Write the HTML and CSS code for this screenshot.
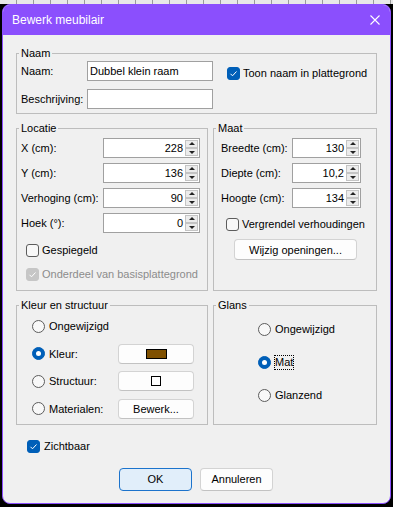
FILE: index.html
```html
<!DOCTYPE html>
<html lang="nl">
<head>
<meta charset="utf-8">
<title>Bewerk meubilair</title>
<link rel="stylesheet" href="styles.css">
</head>
<body>
<div class="ruler"></div>
<div class="dialog">
  <div class="titlebar">
    <span class="title">Bewerk meubilair</span>
    <svg class="close" width="10" height="10" viewBox="0 0 10 10"><path d="M0.5 0.5L9.5 9.5M9.5 0.5L0.5 9.5" stroke="#fff" stroke-width="1.1" fill="none"/></svg>
  </div>
  <div class="content">
    <fieldset class="grp naam">
      <legend>Naam</legend>
      <div class="naam-grid">
        <span>Naam:</span>
        <span class="edit">Dubbel klein raam</span>
        <label class="chk toon"><span class="box on"><svg width="11" height="11" viewBox="0 0 11 11"><path d="M2.5 5.8L4.5 7.8L8.5 3.5" stroke="#fff" stroke-width="1" fill="none"/></svg></span>Toon naam in plattegrond</label>
        <span>Beschrijving:</span>
        <span class="edit"></span>
      </div>
    </fieldset>

    <div class="pair">
      <fieldset class="grp locatie">
        <legend>Locatie</legend>
        <div class="form loc-form">
          <span>X (cm):</span>
          <div class="spin"><span class="val">228</span><span class="arrows"><span class="up"></span><span class="down"></span></span></div>
          <span>Y (cm):</span>
          <div class="spin"><span class="val">136</span><span class="arrows"><span class="up"></span><span class="down"></span></span></div>
          <span>Verhoging (cm):</span>
          <div class="spin"><span class="val">90</span><span class="arrows"><span class="up"></span><span class="down"></span></span></div>
          <span>Hoek (°):</span>
          <div class="spin"><span class="val">0</span><span class="arrows"><span class="up"></span><span class="down"></span></span></div>
        </div>
        <div class="checks">
          <label class="chk"><span class="box"></span>Gespiegeld</label>
          <label class="chk dis"><span class="box on dis"><svg width="11" height="11" viewBox="0 0 11 11"><path d="M2.5 5.8L4.5 7.8L8.5 3.5" stroke="#fff" stroke-width="1" fill="none"/></svg></span>Onderdeel van basisplattegrond</label>
        </div>
      </fieldset>

      <fieldset class="grp maat">
        <legend>Maat</legend>
        <div class="form maat-form">
          <span>Breedte (cm):</span>
          <div class="spin"><span class="val">130</span><span class="arrows"><span class="up"></span><span class="down"></span></span></div>
          <span>Diepte (cm):</span>
          <div class="spin"><span class="val">10,2</span><span class="arrows"><span class="up"></span><span class="down"></span></span></div>
          <span>Hoogte (cm):</span>
          <div class="spin"><span class="val">134</span><span class="arrows"><span class="up"></span><span class="down"></span></span></div>
        </div>
        <label class="chk vergrendel"><span class="box"></span>Vergrendel verhoudingen</label>
        <button class="btn wijzig">Wijzig openingen...</button>
      </fieldset>
    </div>

    <div class="pair second">
      <fieldset class="grp kleur">
        <legend>Kleur en structuur</legend>
        <div class="radio-grid">
          <label class="rad-row"><span class="rad"></span>Ongewijzigd</label>
          <span></span>
          <label class="rad-row"><span class="rad on"></span>Kleur:</label>
          <button class="btn small"><span class="swatch"></span></button>
          <label class="rad-row"><span class="rad"></span>Structuur:</label>
          <button class="btn small"><span class="square"></span></button>
          <label class="rad-row"><span class="rad"></span>Materialen:</label>
          <button class="btn small">Bewerk...</button>
        </div>
      </fieldset>

      <fieldset class="grp glans">
        <legend>Glans</legend>
        <div class="glans-list">
          <label class="rad-row"><span class="rad"></span>Ongewijzigd</label>
          <label class="rad-row"><span class="rad on"></span><span class="focus">Mat</span></label>
          <label class="rad-row"><span class="rad"></span>Glanzend</label>
        </div>
      </fieldset>
    </div>

    <label class="chk zicht"><span class="box on"><svg width="11" height="11" viewBox="0 0 11 11"><path d="M2.5 5.8L4.5 7.8L8.5 3.5" stroke="#fff" stroke-width="1" fill="none"/></svg></span>Zichtbaar</label>

    <div class="actions">
      <button class="btn dlg ok">OK</button>
      <button class="btn dlg">Annuleren</button>
    </div>
  </div>
</div>
</body>
</html>
```
FILE: styles.css
```css
* { box-sizing: border-box; }
html, body { margin: 0; padding: 0; }
body {
  width: 393px;
  height: 507px;
  overflow: hidden;
  background: #000;
  font-family: "Liberation Sans", Arial, sans-serif;
  font-size: 11px;
  color: #000;
}
.ruler {
  height: 4px;
  background: repeating-linear-gradient(90deg, #e8e8e8 0 16px, #9a9a9a 16px 17px);
}
.dialog {
  margin-left: 2px;
  width: 389px;
  height: 500px;
  border: 1px solid #8b4ffd;
  border-radius: 8px;
  background: #f0f0f0;
  overflow: hidden;
  display: flex;
  flex-direction: column;
}
.titlebar {
  height: 30px;
  flex: none;
  background: #8b4ffd;
  color: #fff;
  display: flex;
  align-items: center;
  justify-content: space-between;
  padding: 0 10px 0 9px;
  font-size: 12px;
}
.close { display: block; }
.content {
  flex: 1;
  padding: 11px 13px 0 13px;
  display: flex;
  flex-direction: column;
}
.grp {
  margin: 0;
  min-width: 0;
  border: 1px solid #bdbdbd;
  padding: 0 2px;
}
.grp legend {
  padding: 0 2px;
  line-height: 15px;
}
.naam-grid {
  display: grid;
  grid-template-columns: 66px 126px auto;
  grid-template-rows: 20px 20px;
  row-gap: 8px;
  align-items: center;
  padding: 0 0 4px 2px;
}
.edit {
  display: block;
  height: 20px;
  border: 1px solid #a0a0a0;
  background: #fff;
  padding: 0 2px;
  line-height: 18px;
}
.chk {
  display: flex;
  align-items: center;
  gap: 3px;
}
.box {
  width: 13px;
  height: 13px;
  border-radius: 3px;
  border: 1px solid #5c5c5c;
  background: #f8f8f8;
  display: flex;
  align-items: center;
  justify-content: center;
  flex: none;
}
.box.on { background: #005fb8; border-color: #005fb8; }
.box.on.dis { background: #c6c6c6; border-color: #c6c6c6; }
.chk.dis { color: #8c8c8c; }
.toon { margin-left: 14px; margin-top: 4px; }

.pair {
  display: grid;
  grid-template-columns: 192px 164px;
  justify-content: space-between;
  margin-top: 7px;
}
.pair.second { margin-top: 7px; }

.form {
  display: grid;
  grid-auto-rows: 20px;
  row-gap: 5px;
  align-items: center;
  padding: 2px 0 0 2px;
}
.loc-form { grid-template-columns: 82px 97px; }
.maat-form { grid-template-columns: 71px 69px; padding-left: 5px; }

.spin {
  height: 20px;
  border: 1px solid #a0a0a0;
  background: #fff;
  display: flex;
}
.spin .val {
  flex: 1;
  text-align: right;
  line-height: 18px;
  padding-right: 2px;
}
.arrows {
  width: 14px;
  display: flex;
  flex-direction: column;
  padding: 1px 1px 1px 0;
  gap: 0;
}
.arrows span {
  flex: 1;
  background: #ececec;
  border: 1px solid #c4c4c4;
  position: relative;
}
.arrows span::after {
  content: "";
  position: absolute;
  left: 50%;
  top: 50%;
  width: 0;
  height: 0;
  margin-left: -3px;
  border-left: 3px solid transparent;
  border-right: 3px solid transparent;
}
.arrows .up::after { border-bottom: 3px solid #222; margin-top: -2px; }
.arrows .down::after { border-top: 3px solid #222; margin-top: -1px; }

.checks {
  display: grid;
  grid-auto-rows: 20px;
  row-gap: 4px;
  align-items: center;
  padding: 7px 0 6px 7px;
}
.vergrendel { height: 20px; margin: 6px 0 0 10px; }
.btn {
  font: inherit;
  color: #000;
  background: #fdfdfd;
  border: 1px solid #d3d3d3;
  border-bottom-color: #c2c2c2;
  border-radius: 4px;
  padding: 0;
  display: flex;
  align-items: center;
  justify-content: center;
}
.wijzig { width: 123px; height: 21px; margin: 5px 0 30px 18px; }

.radio-grid {
  display: grid;
  grid-template-columns: 86px 76px;
  grid-auto-rows: 20px;
  row-gap: 7.5px;
  align-items: center;
  padding: 3px 0 5px 13px;
}
.rad-row { display: flex; align-items: center; gap: 4px; }
.rad {
  width: 13px;
  height: 13px;
  border-radius: 50%;
  border: 1px solid #5c5c5c;
  background: #f8f8f8;
  flex: none;
  position: relative;
}
.rad.on { background: #005fb8; border-color: #005fb8; }
.rad.on::after {
  content: "";
  position: absolute;
  left: 3px;
  top: 3px;
  width: 5px;
  height: 5px;
  border-radius: 50%;
  background: #fff;
}
.small { height: 20px; }
.swatch {
  width: 21px;
  height: 10px;
  background: #7f5000;
  border: 1px solid #000;
}
.square {
  width: 10px;
  height: 10px;
  background: #fff;
  border: 1px solid #000;
}
.glans-list {
  display: flex;
  flex-direction: column;
  gap: 13px;
  padding: 6px 0 0 42px;
}
.glans-list .rad-row { height: 20px; }
.focus { outline: 1px dotted #000; outline-offset: 0; line-height: 13px; }

.zicht { margin: 15px 0 0 11px; height: 13px; gap: 4px; }
.actions {
  display: flex;
  justify-content: center;
  gap: 8px;
  margin-top: 15px;
  padding-right: 1px;
}
.dlg { width: 73px; height: 23px; }
.ok { background: #e1eefa; border-color: #1c73cc; }
```
